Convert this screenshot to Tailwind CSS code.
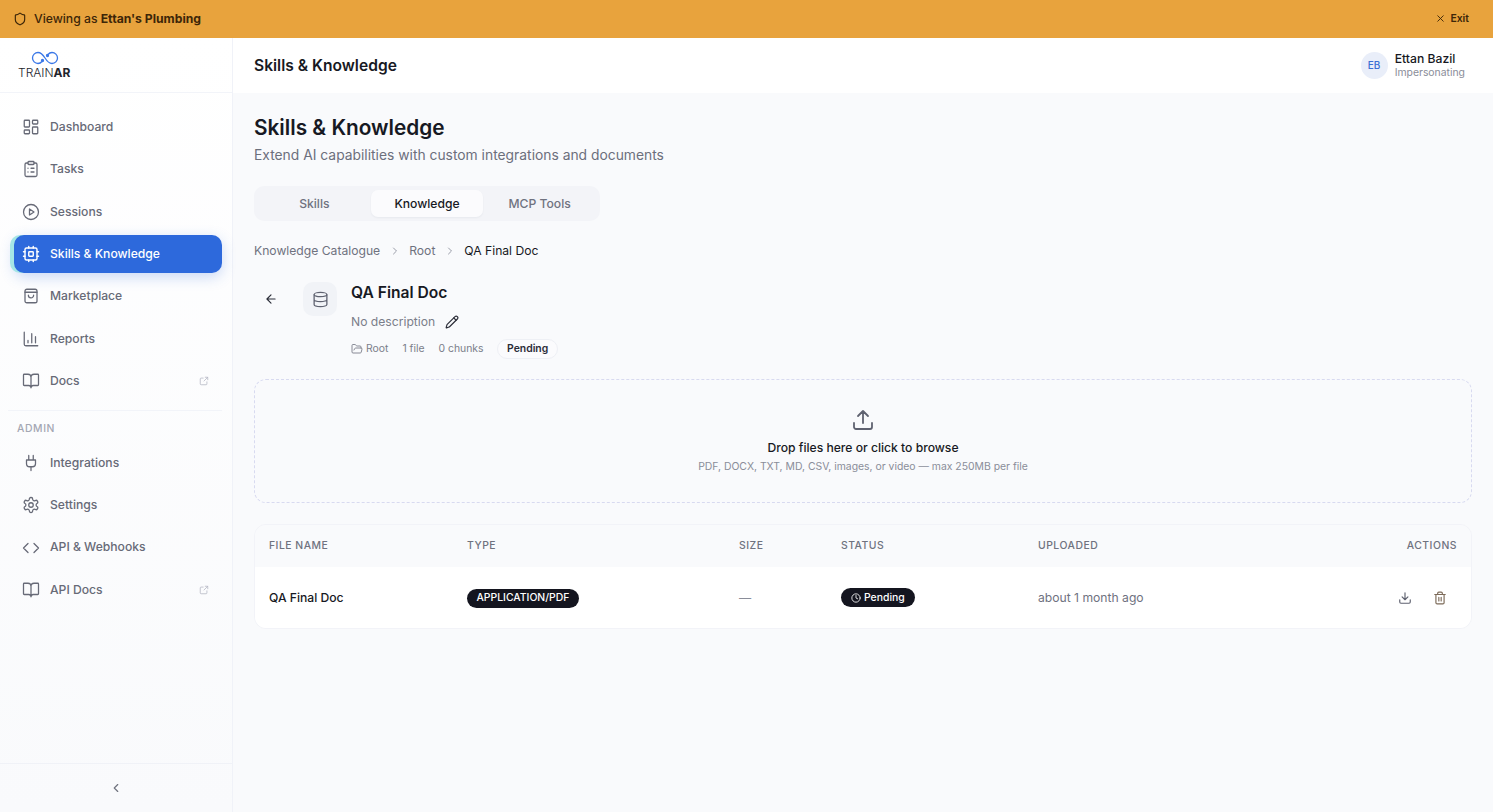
<!DOCTYPE html>
<html lang="en">
<head>
  <meta charset="UTF-8" />
  <title>Skills &amp; Knowledge</title>
  <script src="https://cdn.jsdelivr.net/npm/@tailwindcss/browser@4"></script>
</head>
<body class="h-screen overflow-hidden flex flex-col bg-[#f9fafc] font-['Inter',sans-serif] text-[#171923]">

  <!-- Impersonation banner -->
  <div class="h-[38px] shrink-0 bg-[#e8a33d] flex items-center justify-between pl-[13px] pr-[24px] text-[#3d2608]">
    <div class="flex items-center gap-[7px] text-[12.2px] font-medium">
      <svg class="w-[14px] h-[14px]" fill="none" stroke="currentColor" stroke-width="2" stroke-linecap="round" stroke-linejoin="round" viewBox="0 0 24 24"><path d="M20 13c0 5-3.5 7.5-7.66 8.95a1 1 0 0 1-.67-.01C7.5 20.5 4 18 4 13V6a1 1 0 0 1 1-1c2 0 4.5-1.2 6.24-2.72a1.17 1.17 0 0 1 1.52 0C14.51 3.81 17 5 19 5a1 1 0 0 1 1 1z"/></svg>
      <span>Viewing as <b class="font-bold">Ettan's Plumbing</b></span>
    </div>
    <div class="flex items-center gap-[4px] text-[10.4px] font-semibold">
      <svg class="w-[11px] h-[11px]" fill="none" stroke="currentColor" stroke-width="2" stroke-linecap="round" viewBox="0 0 24 24"><path d="M18 6 6 18M6 6l12 12"/></svg>
      Exit
    </div>
  </div>

  <div class="flex flex-1 min-h-0">
    <!-- Sidebar -->
    <aside class="w-[233px] shrink-0 flex flex-col border-r border-[#f0f2f8] bg-gradient-to-b from-white to-[#f9fafc]">
      <div class="h-[55px] shrink-0 border-b border-[#f2f4f9] pl-[18px] flex flex-col justify-center items-start">
        <svg class="w-[28px] h-[14px] ml-[13px]" fill="none" stroke="#3b78e7" stroke-width="1.3" viewBox="0 0 28 14"><path d="M14 7C11.5 3 9.5 1.5 7 1.5a5.5 5.5 0 0 0 0 11c1.7 0 3-.8 4-2"/><path d="M14 7c2.5 4 4.5 5.5 7 5.5a5.5 5.5 0 0 0 0-11c-1.7 0-3 .8-4 2"/><circle cx="11.5" cy="9.5" r="1" fill="#3b78e7"/><circle cx="16.5" cy="4.5" r="1" fill="#3b78e7"/></svg>
        <div class="text-[12px] leading-[14px] font-light text-[#22242c] mt-[1px]">TRAIN<b class="font-bold">AR</b></div>
      </div>

      <nav class="flex-1 pl-[14px] pr-[10px] pt-[15px] flex flex-col text-[12.15px] font-medium text-[#676a77]">
        <div class="flex flex-col gap-[4px]">
          <a class="h-[38.3px] flex items-center gap-[10px] pl-[8px]">
            <svg class="w-[18px] h-[18px]" fill="none" stroke="currentColor" stroke-width="1.7" stroke-linejoin="round" viewBox="0 0 24 24"><rect x="3" y="3" width="7" height="9" rx="1"/><rect x="14" y="3" width="7" height="5" rx="1"/><rect x="14" y="12" width="7" height="9" rx="1"/><rect x="3" y="16" width="7" height="5" rx="1"/></svg>
            Dashboard
          </a>
          <a class="h-[38.3px] flex items-center gap-[10px] pl-[8px]">
            <svg class="w-[18px] h-[18px]" fill="none" stroke="currentColor" stroke-width="1.7" stroke-linecap="round" stroke-linejoin="round" viewBox="0 0 24 24"><rect x="8" y="2" width="8" height="4" rx="1"/><path d="M16 4h2a2 2 0 0 1 2 2v14a2 2 0 0 1-2 2H6a2 2 0 0 1-2-2V6a2 2 0 0 1 2-2h2M12 11h4M12 16h4M8 11h.01M8 16h.01"/></svg>
            Tasks
          </a>
          <a class="h-[38.3px] flex items-center gap-[10px] pl-[8px]">
            <svg class="w-[18px] h-[18px]" fill="none" stroke="currentColor" stroke-width="1.7" stroke-linejoin="round" viewBox="0 0 24 24"><circle cx="12" cy="12" r="10"/><path d="m10 8 6 4-6 4z"/></svg>
            Sessions
          </a>
          <a class="h-[38.3px] flex items-center gap-[10px] pl-[8px] rounded-[10px] bg-[#2d69dc] text-white shadow-[-4px_0_0_0_#a5e6e6,0_4px_14px_rgba(45,105,220,0.25)]">
            <svg class="w-[18px] h-[18px]" fill="none" stroke="currentColor" stroke-width="1.9" stroke-linecap="round" stroke-linejoin="round" viewBox="0 0 24 24"><rect x="4" y="4" width="16" height="16" rx="2"/><rect x="9" y="9" width="6" height="6" rx="1"/><path d="M15 2v2M15 20v2M2 15h2M2 9h2M20 15h2M20 9h2M9 2v2M9 20v2"/></svg>
            Skills &amp; Knowledge
          </a>
          <a class="h-[38.3px] flex items-center gap-[10px] pl-[8px]">
            <svg class="w-[18px] h-[18px]" fill="none" stroke="currentColor" stroke-width="1.7" stroke-linecap="round" stroke-linejoin="round" viewBox="0 0 24 24"><rect x="4" y="3" width="16" height="18" rx="2.5"/><path d="M4 7h16M8.5 11a3.5 3.5 0 0 0 7 0"/></svg>
            Marketplace
          </a>
          <a class="h-[38.3px] flex items-center gap-[10px] pl-[8px]">
            <svg class="w-[18px] h-[18px]" fill="none" stroke="currentColor" stroke-width="1.7" stroke-linecap="round" stroke-linejoin="round" viewBox="0 0 24 24"><path d="M3 3v16a2 2 0 0 0 2 2h16M8 17v-3M13 17V5M18 17V9"/></svg>
            Reports
          </a>
          <a class="h-[38.3px] flex items-center gap-[10px] pl-[8px] pr-[13px]">
            <svg class="w-[18px] h-[18px]" fill="none" stroke="currentColor" stroke-width="1.7" stroke-linecap="round" stroke-linejoin="round" viewBox="0 0 24 24"><path d="M12 7v14M3 18a1 1 0 0 1-1-1V4a1 1 0 0 1 1-1h5a4 4 0 0 1 4 4 4 4 0 0 1 4-4h5a1 1 0 0 1 1 1v13a1 1 0 0 1-1 1h-6a3 3 0 0 0-3 3 3 3 0 0 0-3-3z"/></svg>
            <span class="flex-1">Docs</span>
            <svg class="w-[10px] h-[10px] text-[#b8bbc7]" fill="none" stroke="currentColor" stroke-width="2" stroke-linecap="round" stroke-linejoin="round" viewBox="0 0 24 24"><path d="M21 3 12 12M15 3h6v6M19 14v5a2 2 0 0 1-2 2H5a2 2 0 0 1-2-2V7a2 2 0 0 1 2-2h5"/></svg>
          </a>
        </div>

        <div class="h-px bg-[#f2f4f9] mt-[10px] -ml-[6px]"></div>
        <div class="pl-[3px] mt-[11px] mb-[8px] text-[10.4px] leading-[14px] tracking-[0.6px] font-medium text-[#a4a7b3]">ADMIN</div>

        <div class="flex flex-col gap-[3.9px]">
          <a class="h-[38.3px] flex items-center gap-[10px] pl-[8px]">
            <svg class="w-[18px] h-[18px]" fill="none" stroke="currentColor" stroke-width="1.7" stroke-linecap="round" stroke-linejoin="round" viewBox="0 0 24 24"><path d="M12 22v-5M9 8V2M15 8V2M18 8v5a4 4 0 0 1-4 4h-4a4 4 0 0 1-4-4V8z"/></svg>
            Integrations
          </a>
          <a class="h-[38.3px] flex items-center gap-[10px] pl-[8px]">
            <svg class="w-[18px] h-[18px]" fill="none" stroke="currentColor" stroke-width="1.7" stroke-linecap="round" stroke-linejoin="round" viewBox="0 0 24 24"><path d="M12.22 2h-.44a2 2 0 0 0-2 2v.18a2 2 0 0 1-1 1.73l-.43.25a2 2 0 0 1-2 0l-.15-.08a2 2 0 0 0-2.73.73l-.22.38a2 2 0 0 0 .73 2.73l.15.1a2 2 0 0 1 1 1.72v.51a2 2 0 0 1-1 1.74l-.15.09a2 2 0 0 0-.73 2.73l.22.38a2 2 0 0 0 2.73.73l.15-.08a2 2 0 0 1 2 0l.43.25a2 2 0 0 1 1 1.73V20a2 2 0 0 0 2 2h.44a2 2 0 0 0 2-2v-.18a2 2 0 0 1 1-1.73l.43-.25a2 2 0 0 1 2 0l.15.08a2 2 0 0 0 2.73-.73l.22-.39a2 2 0 0 0-.73-2.73l-.15-.08a2 2 0 0 1-1-1.74v-.5a2 2 0 0 1 1-1.74l.15-.09a2 2 0 0 0 .73-2.73l-.22-.38a2 2 0 0 0-2.73-.73l-.15.08a2 2 0 0 1-2 0l-.43-.25a2 2 0 0 1-1-1.73V4a2 2 0 0 0-2-2z"/><circle cx="12" cy="12" r="3"/></svg>
            Settings
          </a>
          <a class="h-[38.3px] flex items-center gap-[10px] pl-[8px]">
            <svg class="w-[18px] h-[18px]" fill="none" stroke="currentColor" stroke-width="1.7" stroke-linecap="round" stroke-linejoin="round" viewBox="0 0 24 24"><path d="m16 18 6-6-6-6M8 6l-6 6 6 6"/></svg>
            API &amp; Webhooks
          </a>
          <a class="h-[38.3px] flex items-center gap-[10px] pl-[8px] pr-[13px]">
            <svg class="w-[18px] h-[18px]" fill="none" stroke="currentColor" stroke-width="1.7" stroke-linecap="round" stroke-linejoin="round" viewBox="0 0 24 24"><path d="M12 7v14M3 18a1 1 0 0 1-1-1V4a1 1 0 0 1 1-1h5a4 4 0 0 1 4 4 4 4 0 0 1 4-4h5a1 1 0 0 1 1 1v13a1 1 0 0 1-1 1h-6a3 3 0 0 0-3 3 3 3 0 0 0-3-3z"/></svg>
            <span class="flex-1">API Docs</span>
            <svg class="w-[10px] h-[10px] text-[#b8bbc7]" fill="none" stroke="currentColor" stroke-width="2" stroke-linecap="round" stroke-linejoin="round" viewBox="0 0 24 24"><path d="M21 3 12 12M15 3h6v6M19 14v5a2 2 0 0 1-2 2H5a2 2 0 0 1-2-2V7a2 2 0 0 1 2-2h5"/></svg>
          </a>
        </div>
      </nav>

      <div class="h-[49px] shrink-0 border-t border-[#f0f2f7] flex items-center justify-center">
        <svg class="w-[14px] h-[14px] text-[#70737f]" fill="none" stroke="currentColor" stroke-width="2" stroke-linecap="round" stroke-linejoin="round" viewBox="0 0 24 24"><path d="m15 18-6-6 6-6"/></svg>
      </div>
    </aside>

    <div class="flex-1 min-w-0 flex flex-col">
      <!-- Top bar -->
      <header class="h-[55px] shrink-0 bg-white flex items-center justify-between pl-[21px] pr-[28px]">
        <div class="text-[15.6px] font-semibold">Skills &amp; Knowledge</div>
        <div class="flex items-center gap-[7px]">
          <div class="w-[27px] h-[27px] rounded-full bg-[#e9eef9] text-[#3b6fd4] text-[10px] font-medium flex items-center justify-center">EB</div>
          <div class="-mt-[1px]">
            <div class="text-[12.2px] leading-[15px] font-medium">Ettan Bazil</div>
            <div class="text-[10.4px] leading-[13px] text-[#8a8d99]">Impersonating</div>
          </div>
        </div>
      </header>

      <main class="flex-1 px-[21px] pt-[21px]">
        <h1 class="text-[20.8px] leading-[28px] font-semibold">Skills &amp; Knowledge</h1>
        <p class="text-[13.85px] leading-[20px] mt-[3px] text-[#6c6f7c]">Extend AI capabilities with custom integrations and documents</p>

        <!-- Tabs -->
        <div class="mt-[21px] w-[346px] h-[35px] rounded-[10px] bg-[#f3f4f8] p-[4px] grid grid-cols-3 text-[12.15px] font-medium text-[#6f727f]">
          <div class="flex items-center justify-center pt-[1px]">Skills</div>
          <div class="flex items-center justify-center pt-[1px] rounded-[7px] bg-[#fbfbfd] text-[#171923] shadow-[0_1px_2px_rgba(20,30,60,0.05)]">Knowledge</div>
          <div class="flex items-center justify-center pt-[1px]">MCP Tools</div>
        </div>

        <!-- Breadcrumb -->
        <div class="mt-[20px] flex items-center h-[20px] text-[12.15px] text-[#6f727f]">
          <span>Knowledge Catalogue</span>
          <svg class="w-[12px] h-[12px] mx-[8.5px] text-[#9a9da9]" fill="none" stroke="currentColor" stroke-width="2" stroke-linecap="round" stroke-linejoin="round" viewBox="0 0 24 24"><path d="m9 18 6-6-6-6"/></svg>
          <span>Root</span>
          <svg class="w-[12px] h-[12px] mx-[8.5px] text-[#9a9da9]" fill="none" stroke="currentColor" stroke-width="2" stroke-linecap="round" stroke-linejoin="round" viewBox="0 0 24 24"><path d="m9 18 6-6-6-6"/></svg>
          <span class="text-[#171923]">QA Final Doc</span>
        </div>

        <!-- Document header -->
        <div class="mt-[21px] flex items-start">
          <div class="w-[34px] h-[34px] flex items-center justify-center">
            <svg class="w-[14px] h-[14px]" fill="none" stroke="#2b2d38" stroke-width="2" stroke-linecap="round" stroke-linejoin="round" viewBox="0 0 24 24"><path d="m12 19-7-7 7-7M19 12H5"/></svg>
          </div>
          <div class="ml-[15px] w-[34px] h-[34px] rounded-[10px] bg-[#f1f3f7] flex items-center justify-center">
            <svg class="w-[17px] h-[17px] text-[#5f6270]" fill="none" stroke="currentColor" stroke-width="1.8" viewBox="0 0 24 24"><ellipse cx="12" cy="5" rx="9" ry="3"/><path d="M3 5v14c0 1.7 4 3 9 3s9-1.3 9-3V5M3 12c0 1.7 4 3 9 3s9-1.3 9-3"/></svg>
          </div>
          <div class="ml-[14px] -mt-[1px]">
            <div class="text-[15.6px] leading-[24px] font-semibold">QA Final Doc</div>
            <div class="mt-[7px] flex items-center gap-[10px] text-[12.15px] leading-[20px] text-[#7b7e8a]">
              No description
              <svg class="w-[14px] h-[14px] text-[#2b2d38]" fill="none" stroke="currentColor" stroke-width="2" stroke-linecap="round" stroke-linejoin="round" viewBox="0 0 24 24"><path d="M21.17 6.81a1 1 0 0 0-3.99-3.99L3.84 16.17a2 2 0 0 0-.5.83l-1.32 4.35a.5.5 0 0 0 .62.62l4.35-1.32a2 2 0 0 0 .83-.5z"/><path d="m15 5 4 4"/></svg>
            </div>
            <div class="mt-[7px] flex items-center text-[10.4px] text-[#7b7e8a]">
              <svg class="w-[12px] h-[12px] mr-[3px]" fill="none" stroke="currentColor" stroke-width="1.8" stroke-linecap="round" stroke-linejoin="round" viewBox="0 0 24 24"><path d="m6 14 1.5-2.9A2 2 0 0 1 9.24 10H20a2 2 0 0 1 1.94 2.5l-1.54 6a2 2 0 0 1-1.95 1.5H4a2 2 0 0 1-2-2V5a2 2 0 0 1 2-2h3.9a2 2 0 0 1 1.69.9l.81 1.2a2 2 0 0 0 1.67.9H18a2 2 0 0 1 2 2v2"/></svg>
              <span>Root</span>
              <span class="ml-[14px]">1 file</span>
              <span class="ml-[14px]">0 chunks</span>
              <span class="ml-[13.5px] h-[20px] px-[9px] rounded-full border border-[#eef0f5] bg-[#fbfbfd] flex items-center font-semibold text-[#2b2d38]">Pending</span>
            </div>
          </div>
        </div>

        <!-- Upload area -->
        <div class="mt-[20px] h-[124px] rounded-[12px] border border-dashed border-[#d8daf0] flex flex-col items-center pt-[28px]">
          <svg class="w-[24px] h-[24px] text-[#5f6270]" fill="none" stroke="currentColor" stroke-width="1.8" stroke-linecap="round" stroke-linejoin="round" viewBox="0 0 24 24"><path d="M12 3v12M17 8l-5-5-5 5M21 15v4a2 2 0 0 1-2 2H5a2 2 0 0 1-2-2v-4"/></svg>
          <div class="mt-[7px] text-[12.15px] leading-[18px] font-medium">Drop files here or click to browse</div>
          <div class="mt-[2px] text-[10.4px] leading-[16px] text-[#8a8d99]">PDF, DOCX, TXT, MD, CSV, images, or video — max 250MB per file</div>
        </div>

        <!-- Files table -->
        <div class="mt-[21px] rounded-[12px] border border-[#f2f3f8] overflow-hidden">
          <div class="h-[42px] grid grid-cols-[198px_272px_102px_197px_1fr_auto] items-center px-[14px] bg-[#f9fafc] text-[10.4px] font-medium tracking-[0.5px] text-[#6f727f]">
            <div>FILE NAME</div>
            <div>TYPE</div>
            <div>SIZE</div>
            <div>STATUS</div>
            <div>UPLOADED</div>
            <div>ACTIONS</div>
          </div>
          <div class="h-[61px] grid grid-cols-[198px_272px_102px_197px_1fr_auto] items-center pl-[14px] pr-[24px] pt-[1px] bg-white text-[12.15px]">
            <div class="font-medium">QA Final Doc</div>
            <div><span class="inline-flex items-center h-[19px] px-[9.5px] rounded-full bg-[#14151f] text-white text-[10.4px] font-medium">APPLICATION/PDF</span></div>
            <div class="text-[#8a8d99]">—</div>
            <div><span class="inline-flex items-center gap-[3.5px] h-[19px] pl-[9.5px] pr-[10px] rounded-full bg-[#14151f] text-white text-[10.4px] font-medium">
              <svg class="w-[10px] h-[10px]" fill="none" stroke="currentColor" stroke-width="2" stroke-linecap="round" stroke-linejoin="round" viewBox="0 0 24 24"><circle cx="12" cy="12" r="10"/><path d="M12 6v6l4 2"/></svg>
              Pending</span></div>
            <div class="text-[#6f727f]">about 1 month ago</div>
            <div class="flex items-center gap-[21px]">
              <svg class="w-[14px] h-[14px] text-[#5f6270]" fill="none" stroke="currentColor" stroke-width="2" stroke-linecap="round" stroke-linejoin="round" viewBox="0 0 24 24"><path d="M12 15V3M21 15v4a2 2 0 0 1-2 2H5a2 2 0 0 1-2-2v-4M7 10l5 5 5-5"/></svg>
              <svg class="w-[14px] h-[14px] text-[#7c6a58]" fill="none" stroke="currentColor" stroke-width="2" stroke-linecap="round" stroke-linejoin="round" viewBox="0 0 24 24"><path d="M3 6h18M19 6v14a2 2 0 0 1-2 2H7a2 2 0 0 1-2-2V6M8 6V4a2 2 0 0 1 2-2h4a2 2 0 0 1 2 2v2M10 11v6M14 11v6"/></svg>
            </div>
          </div>
        </div>
      </main>
    </div>
  </div>
</body>
</html>
